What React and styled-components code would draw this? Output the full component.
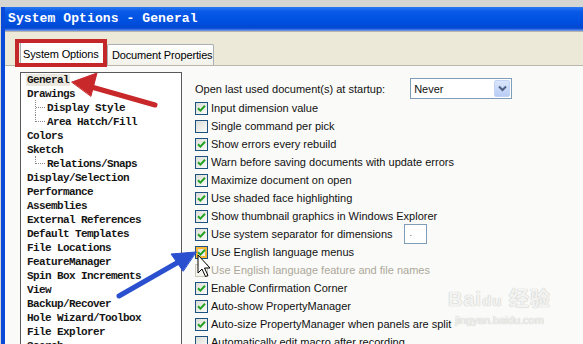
import React from 'react'
import styled, { createGlobalStyle } from 'styled-components'

const GlobalStyle = createGlobalStyle`
    html, body {
        margin: 0;
        padding: 0;
        background: #d6d6d2;
        overflow: hidden;
    }
`

const treeItems = [
    { label: 'General', selected: true },
    { label: 'Drawings' },
    { label: 'Display Style', child: true },
    { label: 'Area Hatch/Fill', child: true, last: true },
    { label: 'Colors' },
    { label: 'Sketch' },
    { label: 'Relations/Snaps', child: true, last: true },
    { label: 'Display/Selection' },
    { label: 'Performance' },
    { label: 'Assemblies' },
    { label: 'External References' },
    { label: 'Default Templates' },
    { label: 'File Locations' },
    { label: 'FeatureManager' },
    { label: 'Spin Box Increments' },
    { label: 'View' },
    { label: 'Backup/Recover' },
    { label: 'Hole Wizard/Toolbox' },
    { label: 'File Explorer' },
    { label: 'Search' },
]

const options = [
    { label: 'Input dimension value', checked: true },
    { label: 'Single command per pick', checked: false },
    { label: 'Show errors every rebuild', checked: true },
    { label: 'Warn before saving documents with update errors', checked: true },
    { label: 'Maximize document on open', checked: true },
    { label: 'Use shaded face highlighting', checked: true },
    { label: 'Show thumbnail graphics in Windows Explorer', checked: true },
    { label: 'Use system separator for dimensions', checked: true, field: true },
    { label: 'Use English language menus', checked: true, hover: true },
    { label: 'Use English language feature and file names', checked: false, disabled: true },
    { label: 'Enable Confirmation Corner', checked: true },
    { label: 'Auto-show PropertyManager', checked: true },
    { label: 'Auto-size PropertyManager when panels are split', checked: true },
    { label: 'Automatically edit macro after recording', checked: false },
]

const Check = () => (
    <svg width="9" height="9" viewBox="0 0 9 9">
        <path d="M1 4.2 L3.4 6.6 L8 1.8" fill="none" stroke="#21a121" strokeWidth="2" />
    </svg>
)

const Chevron = () => (
    <svg width="9" height="7" viewBox="0 0 9 7">
        <path d="M1 1.5 L4.5 5 L8 1.5" fill="none" stroke="#4d6185" strokeWidth="2" />
    </svg>
)

const App = () => {
    return (
        <Screen>
            <GlobalStyle />
            <Window>
                <TitleBar>System Options - General</TitleBar>
                <TabStrip>
                    <Tab active>System Options</Tab>
                    <Tab>Document Properties</Tab>
                </TabStrip>
                <Page>
                    <TreeBox>
                        {treeItems.map((item) => (
                            <TreeRow key={item.label} child={item.child}>
                                {item.child && <Branch last={item.last} />}
                                <TreeLabel selected={item.selected}>{item.label}</TreeLabel>
                            </TreeRow>
                        ))}
                    </TreeBox>
                    <Options>
                        <StartupRow>
                            <Label>Open last used document(s) at startup:</Label>
                            <Select>
                                <span>Never</span>
                                <SelectButton><Chevron /></SelectButton>
                            </Select>
                        </StartupRow>
                        {options.map((opt) => (
                            <OptionRow key={opt.label}>
                                <Box disabled={opt.disabled} hover={opt.hover}>
                                    {opt.checked && <Check />}
                                </Box>
                                <Label disabled={opt.disabled}>{opt.label}</Label>
                                {opt.field && <TinyField>.</TinyField>}
                            </OptionRow>
                        ))}
                    </Options>
                </Page>
            </Window>

            <Highlight />
            <Arrows width="583" height="344" viewBox="0 0 583 344">
                <g stroke="#c8282a" strokeWidth="5" strokeLinecap="round" fill="#c8282a">
                    <line x1="155" y1="105" x2="88" y2="86" />
                    <polygon points="72,82 97,73 91,96" strokeWidth="1" />
                </g>
                <g stroke="#2b50cf" strokeWidth="5" strokeLinecap="round" fill="#2b50cf">
                    <line x1="119" y1="296" x2="182" y2="260" />
                    <polygon points="196,252 171,254 183,271" strokeWidth="1" />
                </g>
                <path
                    d="M198 255 L198 273 L202 269 L205.5 276.5 L208 275.5 L204.5 268 L210 268 Z"
                    fill="#fff"
                    stroke="#000"
                    strokeWidth="1"
                />
            </Arrows>
            <Watermark>
                <Brand>Bai<Paw>du</Paw> 经验</Brand>
                <BrandUrl>jingyan.baidu.com</BrandUrl>
            </Watermark>
        </Screen>
    )
}

export default App

const Screen = styled.div`
    position: relative;
    width: 583px;
    height: 344px;
    overflow: hidden;
    padding-top: 7px;
    padding-left: 1px;
    box-sizing: border-box;
    background: #d6d6d2;
`
const Window = styled.div`
    height: 100%;
    border-left: 4px solid #0a4ad8;
    background: #ece9d8;
    display: flex;
    flex-direction: column;
`
const TitleBar = styled.div`
    height: 25px;
    flex-shrink: 0;
    box-sizing: border-box;
    padding-left: 3px;
    padding-top: 3px;
    background: linear-gradient(#2a7af4 0%, #0a5ae8 18%, #0050e0 60%, #0048d0 88%, #7a9ef0 100%);
    color: #fff;
    font-family: "Liberation Mono", monospace;
    font-weight: bold;
    font-size: 13px;
    letter-spacing: 0.1px;
    line-height: 18px;
    border-bottom: 1px solid #b8b6a8;
`
const TabStrip = styled.div`
    height: 34px;
    flex-shrink: 0;
    box-sizing: border-box;
    display: flex;
    align-items: flex-end;
    padding-left: 15px;
    border-bottom: 1px solid #b9b7ab;
`
const Tab = styled.div`
    font-family: "Liberation Sans", Arial, sans-serif;
    font-size: 11px;
    letter-spacing: -0.15px;
    color: #000;
    white-space: nowrap;
    box-sizing: border-box;
    display: flex;
    align-items: center;
    height: ${(p) => (p.active ? '25px' : '21px')};
    padding: ${(p) => (p.active ? '0 4px 2px 2px' : '0 3px 0 4px')};
    background: ${(p) => (p.active ? '#fff' : 'linear-gradient(#fff, #f2f1ea)')};
    border: 1px solid #a9b0b4;
    border-bottom: none;
    border-top: ${(p) => (p.active ? '2px solid #f7a43a' : '1px solid #a9b0b4')};
    border-radius: 2px 2px 0 0;
    margin-bottom: ${(p) => (p.active ? '-1px' : '0')};
    width: ${(p) => (p.active ? '87px' : '107px')};
`
const Page = styled.div`
    flex: 1;
    background: #fafaf8;
    display: flex;
    gap: 13px;
    padding: 6px 0 0 15px;
    min-height: 0;
`
const TreeBox = styled.div`
    width: 162px;
    flex-shrink: 0;
    box-sizing: border-box;
    border: 1px solid #5a5a5a;
    border-bottom: none;
    background: #fff;
    padding-left: 4px;
    overflow: hidden;
`
const TreeRow = styled.div`
    position: relative;
    height: 14px;
    flex-shrink: 0;
    display: flex;
    align-items: center;
    padding-left: ${(p) => (p.child ? '21px' : '1px')};
`
const Branch = styled.span`
    position: absolute;
    left: 10px;
    top: -1px;
    height: ${(p) => (p.last ? '8px' : '15px')};
    width: 9px;
    border-left: 1px dotted #8a8a8a;
    &::after {
        content: "";
        position: absolute;
        left: 0;
        top: 7px;
        width: 9px;
        border-top: 1px dotted #8a8a8a;
    }
`
const TreeLabel = styled.span`
    font-family: "Liberation Mono", monospace;
    font-weight: bold;
    font-size: 11px;
    letter-spacing: -0.6px;
    color: #161616;
    line-height: 12px;
    padding: 0 1px;
    background: ${(p) => (p.selected ? '#ebe9df' : 'transparent')};
`
const Options = styled.div`
    display: flex;
    flex-direction: column;
    padding-top: 6px;
`
const StartupRow = styled.div`
    height: 21px;
    flex-shrink: 0;
    display: flex;
    align-items: center;
    gap: 25px;
`
const Label = styled.span`
    font-family: "Liberation Sans", Arial, sans-serif;
    font-size: 11px;
    color: ${(p) => (p.disabled ? '#aca899' : '#111')};
    white-space: nowrap;
`
const Select = styled.div`
    width: 102px;
    height: 21px;
    box-sizing: border-box;
    border: 1px solid #7f9db9;
    background: #fff;
    display: flex;
    align-items: center;
    justify-content: space-between;
    padding: 1px 1px 1px 3px;
    font-family: "Liberation Sans", Arial, sans-serif;
    font-size: 11px;
    color: #111;
`
const SelectButton = styled.span`
    width: 16px;
    height: 17px;
    box-sizing: border-box;
    background: linear-gradient(#dbe6fb, #b9cdf5);
    border: 1px solid #c3d3f6;
    border-radius: 2px;
    display: flex;
    align-items: center;
    justify-content: center;
`
const OptionRow = styled.div`
    height: 18px;
    flex-shrink: 0;
    display: flex;
    align-items: center;
    gap: 3px;
`
const Box = styled.span`
    width: 13px;
    height: 13px;
    box-sizing: border-box;
    border: 1px solid ${(p) => (p.disabled ? '#cac8bb' : '#1c5180')};
    background: ${(p) =>
        p.disabled ? '#f4f3ee' : 'linear-gradient(135deg, #dcdcd7, #fbfbf9)'};
    box-shadow: ${(p) => (p.hover ? 'inset 0 0 0 2px #f8b636' : 'none')};
    display: flex;
    align-items: center;
    justify-content: center;
`
const TinyField = styled.span`
    width: 23px;
    height: 20px;
    box-sizing: border-box;
    margin-left: 8px;
    border: 1px solid #7f9db9;
    background: #fff;
    font-family: "Liberation Sans", Arial, sans-serif;
    font-size: 9px;
    color: #555;
    padding: 3px 0 0 5px;
`
const Highlight = styled.div`
    position: absolute;
    left: 15px;
    top: 39px;
    width: 92px;
    height: 28px;
    box-sizing: border-box;
    border: 4px solid #c4272a;
`
const Arrows = styled.svg`
    position: absolute;
    left: 0;
    top: 0;
    pointer-events: none;
`
const Watermark = styled.div`
    position: absolute;
    left: 448px;
    top: 286px;
    display: flex;
    flex-direction: column;
    align-items: center;
    font-family: "Liberation Sans", Arial, "Noto Sans CJK SC", sans-serif;
    color: #f3f3f1;
    text-shadow: 0 0 1px #c9c9c6, 0 0 1px #c9c9c6;
`
const Brand = styled.div`
    font-size: 20px;
    font-weight: bold;
    line-height: 26px;
    letter-spacing: 1px;
`
const Paw = styled.span`
    font-size: 15px;
`
const BrandUrl = styled.div`
    font-size: 11px;
    line-height: 13px;
`
